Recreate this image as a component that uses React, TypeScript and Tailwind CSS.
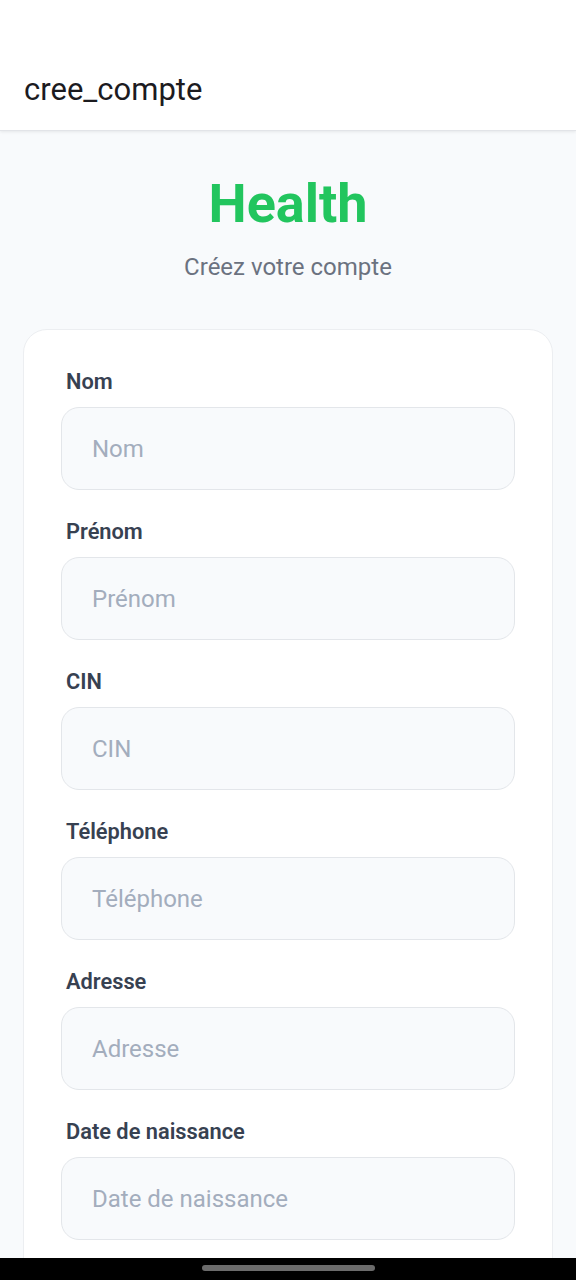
const fields = ["Nom", "Prénom", "CIN", "Téléphone", "Adresse", "Date de naissance"]

const App = () => {
  return (
    <div className="h-[1280px] flex flex-col overflow-hidden bg-[#f8fafc] font-['Roboto',sans-serif]">
      <header className="h-[131px] shrink-0 bg-white border-b border-[#e2e4e8] shadow-[0_1px_3px_rgba(0,0,0,0.08)] px-6 pt-[71px]">
        <h1 className="text-[31px] leading-[38px] text-[#1c1b1f]">cree_compte</h1>
      </header>

      <main className="flex-1 overflow-hidden px-[23px]">
        <div className="text-center pt-[44px]">
          <h2 className="text-[54px] leading-[58px] font-bold text-[#22c55e]">Health</h2>
          <p className="mt-[19px] text-[24px] leading-[30px] text-[#6b7280]">Créez votre compte</p>
        </div>

        <form className="mt-[47px] bg-white border border-[#eceef1] rounded-[24px] px-[37px] pt-[39px] pb-[60px]">
          {fields.map((f) => (
            <div key={f} className="mb-[29px]">
              <label className="block px-[5px] text-[21.8px] leading-[26px] font-semibold text-[#374151]">{f}</label>
              <input
                type="text"
                placeholder={f}
                className="mt-[12px] w-full h-[83px] rounded-[18px] border border-[#e3e6ea] bg-[#f8fafc] px-[30px] text-[24px] placeholder:text-[#a3adbd] outline-none"
              />
            </div>
          ))}
        </form>
      </main>

      <div className="h-[22px] shrink-0 bg-black flex justify-center pt-[7px]">
        <div className="w-[173px] h-[6px] rounded-full bg-[#6b6b6b]" />
      </div>
    </div>
  )
}

export default App
